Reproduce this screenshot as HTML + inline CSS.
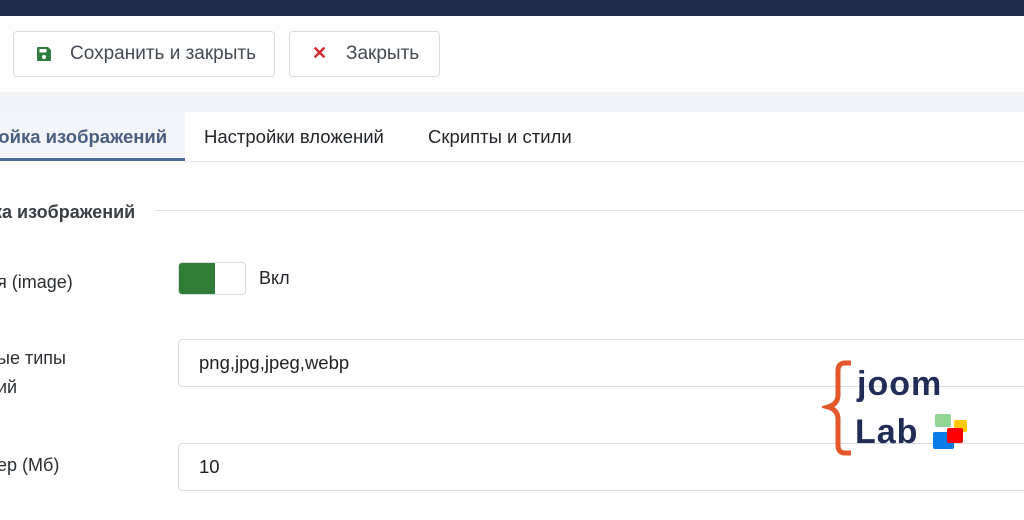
<!DOCTYPE html>
<html><head><meta charset="utf-8"><style>
body{margin:0;width:1024px;height:520px;overflow:hidden;background:#fff;font-family:"Liberation Sans",sans-serif;position:relative;color:#22262a}
.a{position:absolute}
.btn{position:absolute;top:31px;height:46px;border:1px solid #d8dce2;border-radius:4px;background:#fff;font-size:19px;color:#444b53;box-sizing:border-box;line-height:44px}
.inp{position:absolute;left:178px;width:860px;height:48px;border:1px solid #d6dbe2;border-radius:4px;box-sizing:border-box;font-size:18.5px;line-height:46px;padding-left:20px;color:#222}
.lbl{position:absolute;font-size:18px;color:#2a2e33}
</style></head><body>
<div class="a" style="left:0;top:0;width:1024px;height:16px;background:#1f2d48"></div>
<div class="a" style="left:0;top:16px;width:1024px;height:80px;background:#fdfdfe"></div>
<div class="a" style="left:0;top:92px;width:1024px;height:20px;background:#f2f4f8"></div>
<div class="btn" style="left:13px;width:262px">
<svg class="a" style="left:22px;top:14px" width="16" height="16" viewBox="0 0 16 16"><path d="M2 1h10l3 3v10a1 1 0 0 1-1 1H2a1 1 0 0 1-1-1V2a1 1 0 0 1 1-1z" fill="#2e7d3c"/><rect x="3.5" y="3" width="7" height="3.5" fill="#fff"/><circle cx="8" cy="11" r="2" fill="#fff"/></svg>
<span class="a" style="left:56px;top:0">Сохранить и закрыть</span></div>
<div class="btn" style="left:289px;width:151px">
<span class="a" style="left:22px;top:-1px;color:#d0282e;font-size:18px;font-weight:bold">✕</span>
<span class="a" style="left:56px;top:0">Закрыть</span></div>
<div class="a" style="left:0;top:112px;width:185px;height:50px;background:#f3f5f9"></div>
<div class="a" style="left:0;top:158px;width:185px;height:3px;background:#4c6b99"></div>
<div class="a" style="left:185px;top:161px;width:839px;height:1px;background:#e4e7ec"></div>
<div class="a" style="left:-13px;top:126px;font-size:18.5px;font-weight:bold;color:#4a5f80">ройка изображений</div>
<div class="a" style="left:204px;top:126px;font-size:18.5px">Настройки вложений</div>
<div class="a" style="left:428px;top:126px;font-size:18.5px">Скрипты и стили</div>
<div class="a" style="left:-7px;top:202px;font-size:18px;font-weight:bold;color:#3a3f45">ка изображений</div>
<div class="a" style="left:155px;top:210px;width:869px;height:1px;background:#dde1e8"></div>
<div class="lbl" style="left:-3px;top:272px">я (image)</div>
<div class="a" style="left:178px;top:262px;width:68px;height:33px;border:1px solid #d6dbe2;border-radius:4px;box-sizing:border-box;background:#fff;overflow:hidden"><div style="width:36px;height:33px;background:#2f7d36"></div></div>
<div class="a" style="left:259px;top:268px;font-size:18px">Вкл</div>
<div class="lbl" style="left:-3px;top:348px">ые типы</div>
<div class="lbl" style="left:-3px;top:377px">ий</div>
<div class="inp" style="top:339px">png,jpg,jpeg,webp</div>
<div class="lbl" style="left:-3px;top:455px">ер (Мб)</div>
<div class="inp" style="top:443px">10</div>
<svg class="a" style="left:822px;top:360px" width="32" height="100" viewBox="0 0 32 100"><path d="M29 3h-6c-5 0-7 3-7 8v24c0 6-3 10-10 12c7 2 10 6 10 12v26c0 5 2 8 7 8h6" fill="none" stroke="#e2582a" stroke-width="5"/></svg>
<div class="a" style="left:857px;top:364px;font-size:34px;font-weight:bold;color:#222d57;line-height:40px;font-family:'Liberation Sans',sans-serif;letter-spacing:1px">joom</div>
<div class="a" style="left:855px;top:412px;font-size:34px;font-weight:bold;color:#222d57;line-height:40px;font-family:'Liberation Sans',sans-serif;letter-spacing:1px">Lab</div>
<div class="a" style="left:935px;top:414px;width:16px;height:13px;background:#92d695;border-radius:2px"></div>
<div class="a" style="left:954px;top:420px;width:13px;height:12px;background:#ffc800;border-radius:2px"></div>
<div class="a" style="left:933px;top:432px;width:21px;height:17px;background:#0a7be8;border-radius:2px"></div>
<div class="a" style="left:947px;top:428px;width:16px;height:15px;background:#f00;border-radius:2px"></div>
</body></html>
